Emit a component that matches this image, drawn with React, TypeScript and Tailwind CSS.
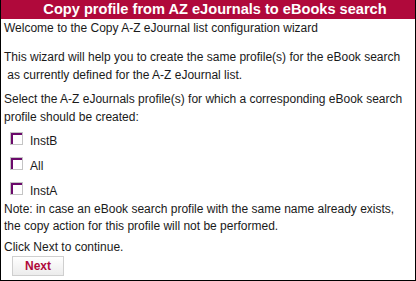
import React from "react"

const profiles = ["InstB", "All", "InstA"]

function Checkbox() {
  return (
    <span className="inline-block h-[13px] w-[13px] border border-[#c4c4c4] bg-white shadow-[inset_2px_2px_0_#6b0a6b]" />
  )
}

export default function App() {
  return (
    <div className="h-[281px] w-[416px] bg-white font-['Liberation_Sans',Arial,sans-serif] text-[12px] text-[#1a1a1a]">
      <div className="flex h-full flex-col border border-t-0 border-black">
        <div className="flex h-[19px] items-center justify-center bg-[#b0093b] pl-[14px] text-[14.6px] font-bold leading-none text-white">
          Copy profile from AZ eJournals to eBooks search
        </div>
        <div className="flex flex-col px-[3px]">
          <p className="leading-[18px]">Welcome to the Copy A-Z eJournal list configuration wizard</p>
          <p className="mt-[11px] leading-[18px]">
            This wizard will help you to create the same profile(s) for the eBook search
            <br />
            &nbsp;as currently defined for the A-Z eJournal list.
          </p>
          <p className="mt-[6px] leading-[18px]">
            Select the A-Z eJournals profile(s) for which a corresponding eBook search
            <br />
            profile should be created:
          </p>
          <div className="flex flex-col pl-[6px]">
            {profiles.map((p, i) => (
              <label key={p} className={`flex items-center gap-[7px] ${i === 2 ? "h-[24px]" : "h-[25px]"}`}>
                <Checkbox />
                <span className="mt-[5px]">{p}</span>
              </label>
            ))}
          </div>
          <p className="mt-[1px] leading-[17px]">
            Note: in case an eBook search profile with the same name already exists,
            <br />
            the copy action for this profile will not be performed.
          </p>
          <p className="mt-[4px] leading-[17px]">Click Next to continue.</p>
          <div className="pl-[8px]">
            <button className="flex h-[20px] w-[52px] items-center justify-center border border-[#cfcfcf] bg-gradient-to-b from-white to-[#ececec] text-[12px] font-bold text-[#b0093b]">
              Next
            </button>
          </div>
        </div>
      </div>
    </div>
  )
}
